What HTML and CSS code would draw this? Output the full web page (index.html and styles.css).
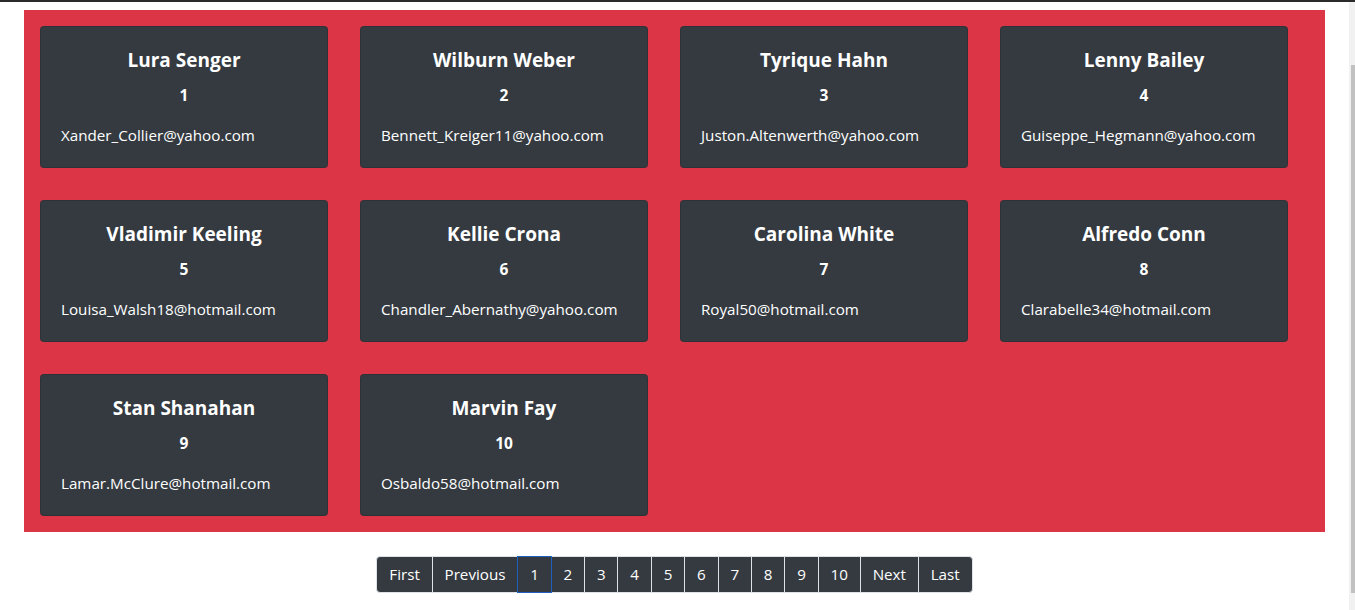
FILE: index.html
```html
<!DOCTYPE html>
<html lang="en">
<head>
<meta charset="utf-8">
<title>Users</title>
<link rel="stylesheet" href="styles.css">
</head>
<body>
<div class="topbar"></div>
<div class="page">
  <main class="main">
    <section class="grid">
      <div class="card"><h5 class="name">Lura Senger</h5><p class="num">1</p><p class="email">Xander_Collier@yahoo.com</p></div>
      <div class="card"><h5 class="name">Wilburn Weber</h5><p class="num">2</p><p class="email">Bennett_Kreiger11@yahoo.com</p></div>
      <div class="card"><h5 class="name">Tyrique Hahn</h5><p class="num">3</p><p class="email">Juston.Altenwerth@yahoo.com</p></div>
      <div class="card"><h5 class="name">Lenny Bailey</h5><p class="num">4</p><p class="email">Guiseppe_Hegmann@yahoo.com</p></div>
      <div class="card"><h5 class="name">Vladimir Keeling</h5><p class="num">5</p><p class="email">Louisa_Walsh18@hotmail.com</p></div>
      <div class="card"><h5 class="name">Kellie Crona</h5><p class="num">6</p><p class="email">Chandler_Abernathy@yahoo.com</p></div>
      <div class="card"><h5 class="name">Carolina White</h5><p class="num">7</p><p class="email">Royal50@hotmail.com</p></div>
      <div class="card"><h5 class="name">Alfredo Conn</h5><p class="num">8</p><p class="email">Clarabelle34@hotmail.com</p></div>
      <div class="card"><h5 class="name">Stan Shanahan</h5><p class="num">9</p><p class="email">Lamar.McClure@hotmail.com</p></div>
      <div class="card"><h5 class="name">Marvin Fay</h5><p class="num">10</p><p class="email">Osbaldo58@hotmail.com</p></div>
    </section>
    <nav class="pager">
      <ul class="pagination">
        <li class="pitem first-item">First</li>
        <li class="pitem">Previous</li>
        <li class="pitem active">1</li>
        <li class="pitem">2</li>
        <li class="pitem">3</li>
        <li class="pitem">4</li>
        <li class="pitem">5</li>
        <li class="pitem">6</li>
        <li class="pitem">7</li>
        <li class="pitem">8</li>
        <li class="pitem">9</li>
        <li class="pitem">10</li>
        <li class="pitem">Next</li>
        <li class="pitem last-item">Last</li>
      </ul>
    </nav>
  </main>
  <aside class="scrollbar"><div class="thumb"></div></aside>
</div>
</body>
</html>
```

FILE: styles.css
```css
* { box-sizing: border-box; }
html, body { margin: 0; padding: 0; height: 100%; overflow: hidden; }
body {
  background: #fff;
  font-family: "Open Sans", "Noto Sans", sans-serif;
  font-size: 15px;
  color: #212529;
}
.topbar { height: 2px; background: #2b2b2b; }
.page { display: flex; height: 608px; }
.main { flex: 1; padding: 8px 24px 0 24px; }
.scrollbar {
  width: 6px;
  background: #f1f1f1;
  display: flex;
  flex-direction: column;
  padding-top: 63px;
  padding-left: 2px;
}
.thumb { width: 4px; height: 528px; background: #c1c1c1; }
.grid {
  background: #dc3545;
  padding: 16px;
  display: flex;
  flex-wrap: wrap;
  gap: 32px;
}
.card {
  width: 288px;
  background: #343a40;
  border: 1px solid rgba(0,0,0,.125);
  border-radius: 4px;
  padding: 20px;
  color: #fff;
}
.name {
  margin: 0 0 11px;
  padding-top: 1px;
  font-size: 19px;
  line-height: 24px;
  font-weight: 700;
  text-align: center;
}
.num {
  margin: 0 0 16px;
  font-size: 15.5px;
  line-height: 24px;
  font-weight: 700;
  text-align: center;
}
.email { margin: 0; line-height: 24px; font-size: 15.2px; }
.pager { display: flex; justify-content: center; margin-top: 24px; }
.pagination { display: flex; list-style: none; margin: 0; padding: 0; }
.pitem {
  background: #343a40;
  color: #fff;
  border: 1px solid #dee2e6;
  margin-left: -1px;
  padding: 6px 11.85px;
  line-height: 23px;
  font-size: 15.2px;
}
.first-item { margin-left: 0; border-radius: 4px 0 0 4px; }
.last-item { border-radius: 0 4px 4px 0; }
.pitem.active { border-color: #1f5fbf; position: relative; z-index: 1; }
```
